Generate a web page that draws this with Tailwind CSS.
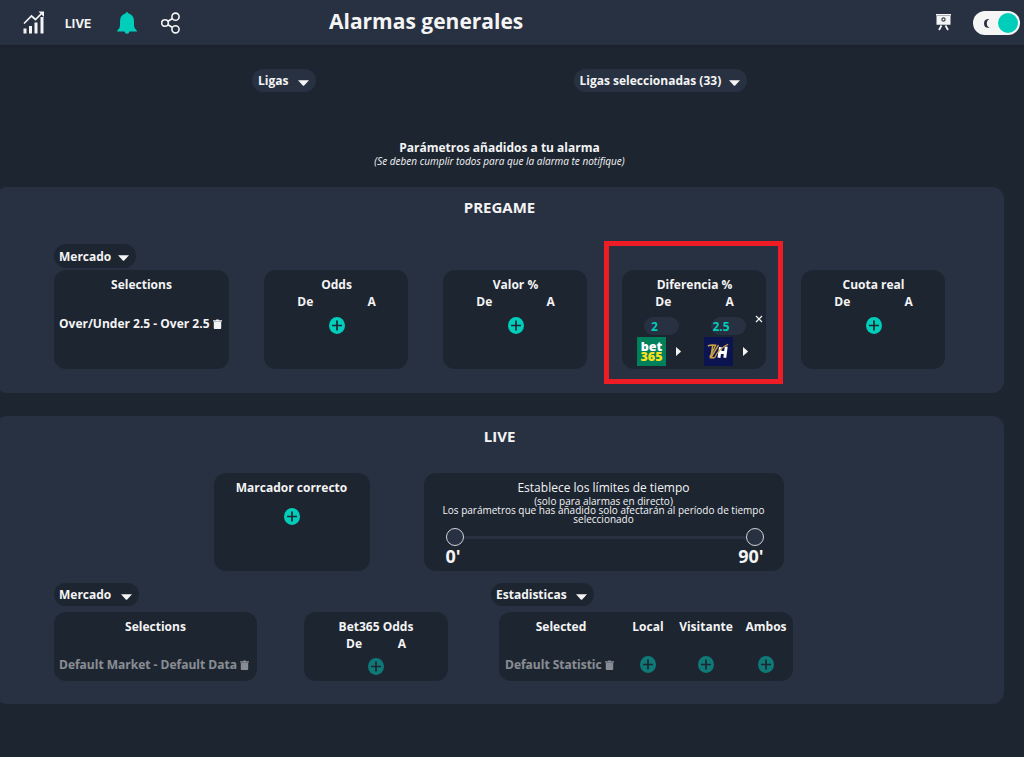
<!DOCTYPE html>
<html lang="es">
<head>
<meta charset="utf-8">
<meta name="viewport" content="width=device-width, initial-scale=1">
<title>Alarmas generales</title>
<script src="https://cdn.jsdelivr.net/npm/@tailwindcss/browser@4"></script>
</head>
<body class="min-h-screen overflow-x-hidden bg-[#1d2531] font-['Open_Sans','Noto_Sans',sans-serif] text-xs/[17px] font-bold text-[#f4f4f4]">

<svg class="hidden" aria-hidden="true">
  <symbol id="plus" viewBox="0 0 16 17"><ellipse cx="8" cy="8.500" rx="8" ry="8.500" fill="#00cdba"/><path d="M8 3.500v10M3 8.500h10" stroke="#1d2531" stroke-width="1.700"/></symbol>
  <symbol id="trash" viewBox="0 0 9 10"><path d="M0 1.200h2.800L3.300.4h2.400l.5.800H9v1.200H0zM.8 2.700h7.400v6.500q0 .8-.8.800H1.600q-.8 0-.8-.8z" fill="currentColor"/></symbol>
  <symbol id="caret" viewBox="0 0 11 6"><path d="M0 .3h11L6.200 5.500q-.7.600-1.400 0z" fill="#f4f4f4"/></symbol>
  <symbol id="next" viewBox="0 0 5 9"><path d="M0 0l4.600 4q.5.500 0 1L0 9z" fill="#f4f4f4"/></symbol>
</svg>

<header class="grid h-[45px] grid-cols-[329fr_695fr] items-center bg-[#283142] shadow-[0_1px_2px_#1a212b]">
  <nav class="flex items-center pl-[23px]">
    <a href="#" aria-label="Estadísticas"><svg class="h-[23px] w-[22px]" viewBox="0 0 22 23" fill="none"><path d="M2 17.500v5M7.500 15v7.500M13 11.500v11M19 6v16.500" stroke="#f4f4f4" stroke-width="3"/><path d="M1 12.500l7.500-7.500 4 3.500L19 2" stroke="#f4f4f4" stroke-width="1.700"/><path d="M15.500.500H21V6z" fill="#f4f4f4"/></svg></a>
    <a href="#" class="ml-5 pt-0.5 font-['Inter',sans-serif]">LIVE</a>
    <a href="#" class="ml-[26px]" aria-label="Alarmas"><svg class="h-[22px] w-5" viewBox="0 0 20 22"><path d="M10 0q1.200 0 1.500 1.500Q17 3 17 9v4.500q0 3 2.300 4.500.7.500.7 1.500h-7.500Q12 21.800 10 21.800T7.500 19.500H0q0-1 .7-1.500Q3 16.500 3 13.500V9q0-6 5.500-7.500Q8.800 0 10 0z" fill="#00cdba"/></svg></a>
    <a href="#" class="ml-6" aria-label="Compartir"><svg class="h-[22px] w-5" viewBox="0 0 20 22" fill="none" stroke="#f4f4f4" stroke-width="1.600"><circle cx="4" cy="11" r="3.300"/><circle cx="14.500" cy="4.700" r="3.600"/><circle cx="14.500" cy="17.300" r="3.600"/><path d="M7 9.300l4.500-2.800M7 12.700l4.500 2.800"/></svg></a>
  </nav>
  <div class="flex items-center pr-1">
    <h1 class="pb-1 text-[21px]/[30px] font-bold">Alarmas generales</h1>
    <a href="#" class="ml-auto" aria-label="Tutorial"><svg class="h-[17px] w-[15px]" viewBox="0 0 15 17"><path d="M0 0h15v1.500h-.5v9.300H.5V1.500H0z" fill="#f4f4f4"/><path d="M.5 1.500h14" stroke="#8b919c" stroke-width=".7"/><circle cx="7.500" cy="5.500" r="1.600" fill="none" stroke="#39404e" stroke-width="1.200"/><path d="M5.500 11.500L3 16M9.500 11.500L12 16" stroke="#f4f4f4" stroke-width="1.800"/></svg></a>
    <label class="relative ml-[22px] block h-6 w-[47px]" aria-label="Modo oscuro">
      <input type="checkbox" checked class="block h-6 w-[47px] appearance-none rounded-full bg-[#f5f5f5] before:ml-[2px] before:mt-[2px] before:block before:size-5 before:rounded-full before:bg-[#00cdba] checked:before:ml-[25px]">
      <svg class="pointer-events-none absolute left-[11px] top-[8px] h-[9px] w-[6px]" viewBox="0 0 6 9"><path d="M5.500 0Q2.800 1.200 2.800 4.500T5.800 8.700Q0 9.600 0 4.600T5.500 0z" fill="#283142"/></svg>
    </label>
  </div>
</header>

<main class="-ml-[5px] mr-5">
  <div class="grid grid-cols-2 justify-items-center pl-[101px] pr-[156px] pt-6">
    <label class="relative block">
      <select aria-label="Ligas" class="block h-[23px] w-16 appearance-none rounded-full bg-[#283142] pl-1.5"><option>Ligas</option></select>
      <svg class="pointer-events-none absolute right-[7px] top-[11px] h-[6px] w-[11px]"><use href="#caret"/></svg>
    </label>
    <label class="relative block">
      <select aria-label="Ligas seleccionadas" class="block h-[23px] w-[173px] appearance-none rounded-full bg-[#283142] pl-1.5"><option>Ligas seleccionadas (33)</option></select>
      <svg class="pointer-events-none absolute right-[7px] top-[11px] h-[6px] w-[11px]"><use href="#caret"/></svg>
    </label>
  </div>

  <div class="mt-[47px] text-center">
    <h2>Parámetros añadidos a tu alarma</h2>
    <p class="text-[10px]/[11px] font-normal italic">(Se deben cumplir todos para que la alarma te notifique)</p>
  </div>

  <section class="mt-5 rounded-xl bg-[#283142] pb-6 pt-2.5">
    <h2 class="text-center text-[15px]/5">PREGAME</h2>
    <div class="mt-[27px] px-[59px]">
      <label class="relative inline-block align-top">
        <select aria-label="Mercado" class="block h-6 w-[82px] appearance-none rounded-full bg-[#1d2531] pl-[5px]"><option>Mercado</option></select>
        <svg class="pointer-events-none absolute right-[7px] top-[11px] h-[6px] w-[11px]"><use href="#caret"/></svg>
      </label>
      <div class="mt-0.5 flex gap-[35px]">
        <article class="min-h-[99px] w-[175px] shrink-0 rounded-xl bg-[#1d2531] pt-1.5">
          <h3 class="text-center">Selections</h3>
          <div class="mt-[22px] flex items-center gap-[3px] whitespace-nowrap pl-[5px]"><span>Over/Under 2.5 - Over 2.5</span><button aria-label="Eliminar"><svg class="block h-[10px] w-[9px]"><use href="#trash"/></svg></button></div>
        </article>
        <article class="min-h-[99px] w-36 shrink-0 rounded-xl bg-[#1d2531] pl-px pt-1.5 text-center">
          <h3>Odds</h3>
          <div class="grid grid-cols-2 pl-[7px] pr-[3px]"><span>De</span><span>A</span></div>
          <button class="mt-[7px] h-[17px] w-4" aria-label="Añadir odds"><svg class="block h-[17px] w-4"><use href="#plus"/></svg></button>
        </article>
        <article class="min-h-[99px] w-36 shrink-0 rounded-xl bg-[#1d2531] pl-px pt-1.5 text-center">
          <h3>Valor %</h3>
          <div class="grid grid-cols-2 pl-[7px] pr-[3px]"><span>De</span><span>A</span></div>
          <button class="mt-[7px] h-[17px] w-4" aria-label="Añadir valor"><svg class="block h-[17px] w-4"><use href="#plus"/></svg></button>
        </article>
        <article class="relative min-h-[99px] w-36 shrink-0 rounded-xl bg-[#1d2531] pl-px pt-1.5 text-center">
          <h3>Diferencia %</h3>
          <div class="grid grid-cols-2 pl-[7px] pr-[3px]">
            <label for="dif-de">De</label><label for="dif-a">A</label>
            <div class="mt-[7px] px-3.5"><input id="dif-de" value="2" class="block h-[18px] w-[35px] rounded-full bg-[#283142] pr-3.5 text-center text-[#00cdba]"></div>
            <div class="mt-[7px] px-3.5"><input id="dif-a" value="2.5" class="block h-[18px] w-[35px] rounded-full bg-[#283142] pr-3.5 text-center text-[#00cdba]"></div>
            <div class="mt-0.5 flex items-center gap-2.5 pl-[7px]">
              <svg class="size-[29px]" viewBox="0 0 30 30" role="img" aria-label="bet365"><path d="M0 0h30v30H0z" fill="#007f5b"/><text x="15" y="14" text-anchor="middle" font-size="13" font-weight="800" fill="#fff">bet</text><text x="15" y="25" text-anchor="middle" font-size="13" font-weight="800" fill="#f6e01f">365</text></svg>
              <button aria-label="Cambiar casa"><svg class="block h-[9px] w-[5px]"><use href="#next"/></svg></button>
            </div>
            <div class="mt-0.5 flex items-center gap-2.5 pl-[7px]">
              <svg class="size-[29px]" viewBox="0 0 30 30" role="img" aria-label="William Hill" fill="none"><path d="M0 0h30v30H0z" fill="#0b1450"/><path d="M4 9.500Q6 8 12 8.500L6 21M9 9l-1.500 9M15 8.500L7 21.500h4" stroke="#cba243" stroke-width="1.500"/><path d="M15.500 21.500l1.500-11M21.500 21.500L23 10M16 16h6" stroke="#fff" stroke-width="3"/><path d="M11 21.500Q15 12 25 7.500" stroke="#cba243" stroke-width="1.400"/></svg>
              <button aria-label="Cambiar casa"><svg class="block h-[9px] w-[5px]"><use href="#next"/></svg></button>
            </div>
          </div>
          <button class="absolute right-[3px] top-[45px]" aria-label="Quitar"><svg class="block size-2" viewBox="0 0 8 8"><path d="M1 1l6 6M7 1L1 7" stroke="#f4f4f4" stroke-width="1.200"/></svg></button>
          <div class="pointer-events-none absolute -bottom-[15px] -left-[18px] -right-[17px] -top-[29px] border-[5px] border-[#ee1c25]"></div>
        </article>
        <article class="min-h-[99px] w-36 shrink-0 rounded-xl bg-[#1d2531] pl-px pt-1.5 text-center">
          <h3>Cuota real</h3>
          <div class="grid grid-cols-2 pl-[7px] pr-[3px]"><span>De</span><span>A</span></div>
          <button class="mt-[7px] h-[17px] w-4" aria-label="Añadir cuota real"><svg class="block h-[17px] w-4"><use href="#plus"/></svg></button>
        </article>
      </div>
    </div>
  </section>

  <section class="mt-[23px] rounded-xl bg-[#283142] pb-[23px] pt-2.5">
    <h2 class="text-center text-[15px]/5">LIVE</h2>
    <div class="mt-[27px] flex justify-center gap-[54px] pr-0.5">
      <article class="w-[156px] rounded-xl bg-[#1d2531] pt-1.5 text-center">
        <h3>Marcador correcto</h3>
        <button class="mt-3 h-[17px] w-4" aria-label="Añadir marcador"><svg class="block h-[17px] w-4"><use href="#plus"/></svg></button>
      </article>
      <article class="w-[360px] rounded-xl bg-[#1d2531] px-3 pb-[5px] pt-1.5 text-center font-normal">
        <h3>Establece los límites de tiempo</h3>
        <p class="pt-px text-[10px]/[9px]">(solo para alarmas en directo)<br>Los parámetros que has añadido solo afectarán al período de tiempo seleccionado</p>
        <div class="relative ml-2.5 mr-2 mt-1 h-[18px]">
          <div class="absolute inset-x-2 top-2 h-[3px] bg-[#283142]"></div>
          <input type="range" min="0" max="90" value="0" aria-label="Minuto inicial" class="pointer-events-none absolute inset-0 block h-[18px] w-full appearance-none bg-transparent [&::-webkit-slider-thumb]:pointer-events-auto [&::-webkit-slider-thumb]:size-[18px] [&::-webkit-slider-thumb]:appearance-none [&::-webkit-slider-thumb]:rounded-full [&::-webkit-slider-thumb]:border [&::-webkit-slider-thumb]:border-solid [&::-webkit-slider-thumb]:border-[#d0d3d8] [&::-webkit-slider-thumb]:bg-[#283142]">
          <input type="range" min="0" max="90" value="90" aria-label="Minuto final" class="pointer-events-none absolute inset-0 block h-[18px] w-full appearance-none bg-transparent [&::-webkit-slider-thumb]:pointer-events-auto [&::-webkit-slider-thumb]:size-[18px] [&::-webkit-slider-thumb]:appearance-none [&::-webkit-slider-thumb]:rounded-full [&::-webkit-slider-thumb]:border [&::-webkit-slider-thumb]:border-solid [&::-webkit-slider-thumb]:border-[#d0d3d8] [&::-webkit-slider-thumb]:bg-[#283142]">
        </div>
        <div class="ml-2.5 mr-2 flex justify-between text-lg/5 font-bold"><span>0'</span><span>90'</span></div>
      </article>
    </div>

    <div class="mt-3 flex items-start px-[59px]">
      <div class="w-[203px]">
        <label class="relative inline-block align-top">
          <select aria-label="Mercado en directo" class="block h-[23px] w-[85px] appearance-none rounded-full bg-[#1d2531] pl-[5px]"><option>Mercado</option></select>
          <svg class="pointer-events-none absolute right-[7px] top-[11px] h-[6px] w-[11px]"><use href="#caret"/></svg>
        </label>
        <article class="mt-1.5 min-h-[69px] rounded-xl bg-[#1d2531] pt-1.5">
          <h3 class="text-center">Selections</h3>
          <div class="mt-[21px] flex items-center gap-[3px] whitespace-nowrap pl-[5px] opacity-50"><span>Default Market - Default Data</span><button aria-label="Eliminar"><svg class="block h-[10px] w-[9px]"><use href="#trash"/></svg></button></div>
        </article>
      </div>
      <article class="ml-[47px] mt-[29px] min-h-[69px] w-36 rounded-xl bg-[#1d2531] pt-1.5 text-center">
        <h3>Bet365 Odds</h3>
        <div class="grid grid-cols-2 pl-[26px] pr-[22px]"><span>De</span><span>A</span></div>
        <button class="mt-1.5 h-[17px] w-4 opacity-50" aria-label="Añadir odds Bet365"><svg class="block h-[17px] w-4"><use href="#plus"/></svg></button>
      </article>
      <div class="ml-[43px]">
        <label class="relative inline-block align-top">
          <select aria-label="Estadisticas" class="block h-[23px] w-[103px] appearance-none rounded-full bg-[#1d2531] pl-[5px]"><option>Estadisticas</option></select>
          <svg class="pointer-events-none absolute right-[7px] top-[11px] h-[6px] w-[11px]"><use href="#caret"/></svg>
        </label>
        <div class="ml-2 mt-1.5 min-h-[69px] w-[294px] rounded-xl bg-[#1d2531] pt-1.5">
          <table class="w-full table-fixed text-center">
            <thead><tr><th class="w-[124px] p-0">Selected</th><th class="w-[50px] p-0">Local</th><th class="w-[66px] p-0">Visitante</th><th class="p-0">Ambos</th></tr></thead>
            <tbody><tr class="opacity-50">
              <td class="px-0 pt-[21px]"><div class="flex items-center gap-[3px] whitespace-nowrap pl-1.5"><span>Default Statistic</span><button aria-label="Eliminar"><svg class="block h-[10px] w-[9px]"><use href="#trash"/></svg></button></div></td>
              <td class="px-0 pt-[21px]"><button class="block mx-auto" aria-label="Añadir local"><svg class="block h-[17px] w-4"><use href="#plus"/></svg></button></td>
              <td class="px-0 pt-[21px]"><button class="block mx-auto" aria-label="Añadir visitante"><svg class="block h-[17px] w-4"><use href="#plus"/></svg></button></td>
              <td class="px-0 pt-[21px]"><button class="block mx-auto" aria-label="Añadir ambos"><svg class="block h-[17px] w-4"><use href="#plus"/></svg></button></td>
            </tr></tbody>
          </table>
        </div>
      </div>
    </div>
  </section>
</main>
</body>
</html>
